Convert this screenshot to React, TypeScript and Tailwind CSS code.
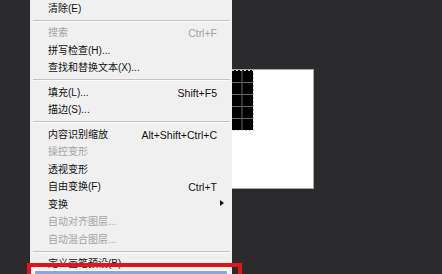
import React from "react";

type Item =
  | { kind: "sep" }
  | { kind: "item"; label: string; shortcut?: string; disabled?: boolean; submenu?: boolean };

const items: Item[] = [
  { kind: "item", label: "清除(E)" },
  { kind: "sep" },
  { kind: "item", label: "搜索", shortcut: "Ctrl+F", disabled: true },
  { kind: "item", label: "拼写检查(H)..." },
  { kind: "item", label: "查找和替换文本(X)..." },
  { kind: "sep" },
  { kind: "item", label: "填充(L)...", shortcut: "Shift+F5" },
  { kind: "item", label: "描边(S)..." },
  { kind: "sep" },
  { kind: "item", label: "内容识别缩放", shortcut: "Alt+Shift+Ctrl+C" },
  { kind: "item", label: "操控变形", disabled: true },
  { kind: "item", label: "透视变形" },
  { kind: "item", label: "自由变换(F)", shortcut: "Ctrl+T" },
  { kind: "item", label: "变换", submenu: true },
  { kind: "item", label: "自动对齐图层...", disabled: true },
  { kind: "item", label: "自动混合图层...", disabled: true },
  { kind: "sep" },
  { kind: "item", label: "定义画笔预设(B)..." },
];

const font = "font-['Liberation_Sans','Noto_Sans_CJK_SC',sans-serif]";

function MenuRow({ item }: { item: Item }) {
  if (item.kind === "sep") {
    return (
      <div className="h-[7px] shrink-0 pt-[2px] pl-[3px] pr-[2px]">
        <div className="h-[1px] bg-[#c4c4c4]" />
        <div className="h-[1px] bg-[#fbfbfb]" />
      </div>
    );
  }
  const color = item.disabled ? "text-[#a3a3a3]" : "text-[#111]";
  return (
    <div className={`h-[17.5px] shrink-0 flex items-center justify-between pl-[18px] pr-[15px] ${color}`}>
      <span className="text-[10px] leading-none">{item.label}</span>
      {item.shortcut && <span className="text-[10.5px] leading-none">{item.shortcut}</span>}
      {item.submenu && (
        <svg width="4" height="6" viewBox="0 0 4 6" className="mr-[-7px] mt-[-4px]">
          <path d="M0 0 L4 3 L0 6 Z" fill="#111" />
        </svg>
      )}
    </div>
  );
}

export default function App() {
  return (
    <div className={`relative w-[442px] h-[274px] overflow-hidden bg-[#2b2a2c] flex items-start ${font}`}>
      {/* left dark strip */}
      <div className="w-[30px] shrink-0" />

      {/* Edit menu */}
      <div className="w-[202px] shrink-0 bg-[#f0f0f0] flex flex-col">
        {items.map((it, i) => (
          <MenuRow key={i} item={it} />
        ))}
        {/* highlighted next item */}
        <div className="shrink-0 mt-[-3px] mx-[4px] h-[14px] border border-white bg-[#86a9dc]" />
      </div>

      {/* document canvas */}
      <div className="flex-1 pt-[69px]">
        <div className="w-[82px] h-[120px] bg-white border border-l-0 border-[#a8a8a8]">
          <svg width="81" height="118" viewBox="0 0 81 118" className="block">
            <rect x="0" y="0" width="21" height="60" fill="#000" />
            <line x1="10" y1="0" x2="10" y2="60" stroke="#6a6a6a" strokeWidth="1" />
            {[12, 24, 36, 48].map((y) => (
              <line key={y} x1="0" y1={y + 0.5} x2="21" y2={y + 0.5} stroke="#6a6a6a" strokeWidth="1" />
            ))}
            <path
              d="M0 0.5 H21.5 V60.5 H0"
              fill="none"
              stroke="#cfcfcf"
              strokeWidth="1"
              strokeDasharray="2 2"
            />
          </svg>
        </div>
      </div>

      {/* red annotation box */}
      <div className="absolute left-[27px] top-[263px] w-[215px] h-[24px] border-4 border-[#e0141b]" />
    </div>
  );
}
